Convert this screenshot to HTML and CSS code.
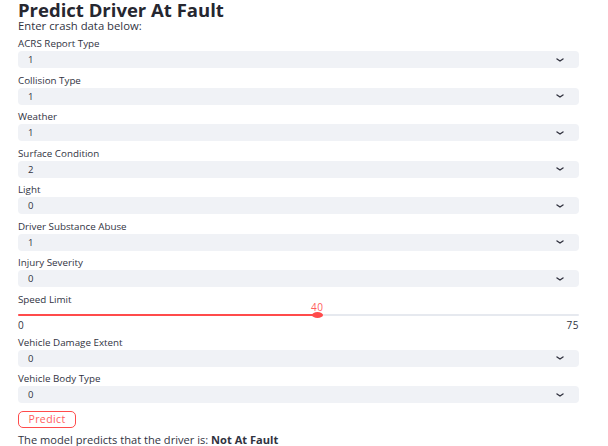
FILE: index.html
```html
<!DOCTYPE html>
<html>
<head>
<meta charset="utf-8">
<link rel="stylesheet" href="styles.css">
</head>
<body>
<div class="app">
  <h1 class="title">Predict Driver At Fault</h1>
  <p class="intro">Enter crash data below:</p>
  <div class="fields">
    <div class="field"><label class="label">ACRS Report Type</label><div class="select"><span class="value">1</span><svg class="chev" width="8" height="4" viewBox="0 0 8 4"><path d="M1 1 L4 3 L7 1" fill="none" stroke="#31333f" stroke-width="1.4" stroke-linecap="round" stroke-linejoin="round"/></svg></div></div>
    <div class="field"><label class="label">Collision Type</label><div class="select"><span class="value">1</span><svg class="chev" width="8" height="4" viewBox="0 0 8 4"><path d="M1 1 L4 3 L7 1" fill="none" stroke="#31333f" stroke-width="1.4" stroke-linecap="round" stroke-linejoin="round"/></svg></div></div>
    <div class="field"><label class="label">Weather</label><div class="select"><span class="value">1</span><svg class="chev" width="8" height="4" viewBox="0 0 8 4"><path d="M1 1 L4 3 L7 1" fill="none" stroke="#31333f" stroke-width="1.4" stroke-linecap="round" stroke-linejoin="round"/></svg></div></div>
    <div class="field"><label class="label">Surface Condition</label><div class="select"><span class="value">2</span><svg class="chev" width="8" height="4" viewBox="0 0 8 4"><path d="M1 1 L4 3 L7 1" fill="none" stroke="#31333f" stroke-width="1.4" stroke-linecap="round" stroke-linejoin="round"/></svg></div></div>
    <div class="field"><label class="label">Light</label><div class="select"><span class="value">0</span><svg class="chev" width="8" height="4" viewBox="0 0 8 4"><path d="M1 1 L4 3 L7 1" fill="none" stroke="#31333f" stroke-width="1.4" stroke-linecap="round" stroke-linejoin="round"/></svg></div></div>
    <div class="field"><label class="label">Driver Substance Abuse</label><div class="select"><span class="value">1</span><svg class="chev" width="8" height="4" viewBox="0 0 8 4"><path d="M1 1 L4 3 L7 1" fill="none" stroke="#31333f" stroke-width="1.4" stroke-linecap="round" stroke-linejoin="round"/></svg></div></div>
    <div class="field"><label class="label">Injury Severity</label><div class="select"><span class="value">0</span><svg class="chev" width="8" height="4" viewBox="0 0 8 4"><path d="M1 1 L4 3 L7 1" fill="none" stroke="#31333f" stroke-width="1.4" stroke-linecap="round" stroke-linejoin="round"/></svg></div></div>
    <div class="field slider-field">
      <label class="label">Speed Limit</label>
      <div class="slider">
        <div class="track"><div class="fill" style="width: 53.33%"></div><div class="thumb" style="left: 53.33%"><span class="thumb-value">40</span></div></div>
        <div class="ticks"><span>0</span><span>75</span></div>
      </div>
    </div>
    <div class="field"><label class="label">Vehicle Damage Extent</label><div class="select"><span class="value">0</span><svg class="chev" width="8" height="4" viewBox="0 0 8 4"><path d="M1 1 L4 3 L7 1" fill="none" stroke="#31333f" stroke-width="1.4" stroke-linecap="round" stroke-linejoin="round"/></svg></div></div>
    <div class="field"><label class="label">Vehicle Body Type</label><div class="select"><span class="value">0</span><svg class="chev" width="8" height="4" viewBox="0 0 8 4"><path d="M1 1 L4 3 L7 1" fill="none" stroke="#31333f" stroke-width="1.4" stroke-linecap="round" stroke-linejoin="round"/></svg></div></div>
  </div>
  <button class="btn">Predict</button>
  <p class="result">The model predicts that the driver is: <strong>Not At Fault</strong></p>
</div>
</body>
</html>
```

FILE: styles.css
```css
html, body {
  margin: 0;
  padding: 0;
  background: #ffffff;
}
body {
  font-family: "Open Sans", "Noto Sans", sans-serif;
  color: #31333f;
}
.app {
  padding: 0 29px 0 18px;
  display: flex;
  flex-direction: column;
  align-items: stretch;
}
.title {
  margin: 0;
  height: 19px;
  line-height: 19px;
  font-size: 18.5px;
  font-weight: 700;
  color: #262730;
}
.intro {
  margin: 0;
  height: 14px;
  line-height: 14px;
  font-size: 11.3px;
  color: #31333f;
}
.fields {
  display: flex;
  flex-direction: column;
  gap: 6.5px;
  margin-top: 5px;
}
.field {
  display: flex;
  flex-direction: column;
  gap: 1px;
}
.label {
  display: block;
  height: 12px;
  line-height: 12px;
  font-size: 9.8px;
  color: #31333f;
}
.select {
  height: 17px;
  background: #f0f2f6;
  border-radius: 4px;
  display: flex;
  align-items: center;
  justify-content: space-between;
  padding: 0 15px 0 10px;
}
.value {
  font-size: 9.5px;
  line-height: 17px;
  letter-spacing: 0.5px;
}
.chev {
  display: block;
}
.slider {
  height: 23px;
  display: flex;
  flex-direction: column;
  margin-bottom: 0.5px;
}
.track {
  position: relative;
  height: 2px;
  margin-top: 7.5px;
  background: #e6e9ef;
  border-radius: 1px;
}
.fill {
  height: 2px;
  background: #ff4b4b;
  border-radius: 1px;
}
.thumb {
  position: absolute;
  top: -2px;
  width: 11px;
  height: 6px;
  margin-left: -5.5px;
  border-radius: 50%;
  background: #ff4b4b;
}
.thumb-value {
  position: absolute;
  bottom: 6px;
  left: 50%;
  transform: translateX(-50%);
  font-size: 10px;
  line-height: 10px;
  color: #ff5c5c;
  letter-spacing: 0.5px;
}
.ticks {
  display: flex;
  justify-content: space-between;
  font-size: 10px;
  line-height: 10px;
  margin-top: 4px;
  letter-spacing: 0.5px;
}
.btn {
  align-self: flex-start;
  margin-top: 8px;
  width: 58px;
  height: 17px;
  padding: 0;
  border: 1px solid #ff4b4b;
  border-radius: 5px;
  background: #ffffff;
  color: #ff5c5c;
  font-family: "Open Sans", "Noto Sans", sans-serif;
  font-size: 10.5px;
  letter-spacing: 0.4px;
  line-height: 15px;
}
.result {
  margin: 5px 0 0;
  font-size: 11.1px;
  line-height: 14px;
}
.result strong {
  font-weight: 700;
}
```
